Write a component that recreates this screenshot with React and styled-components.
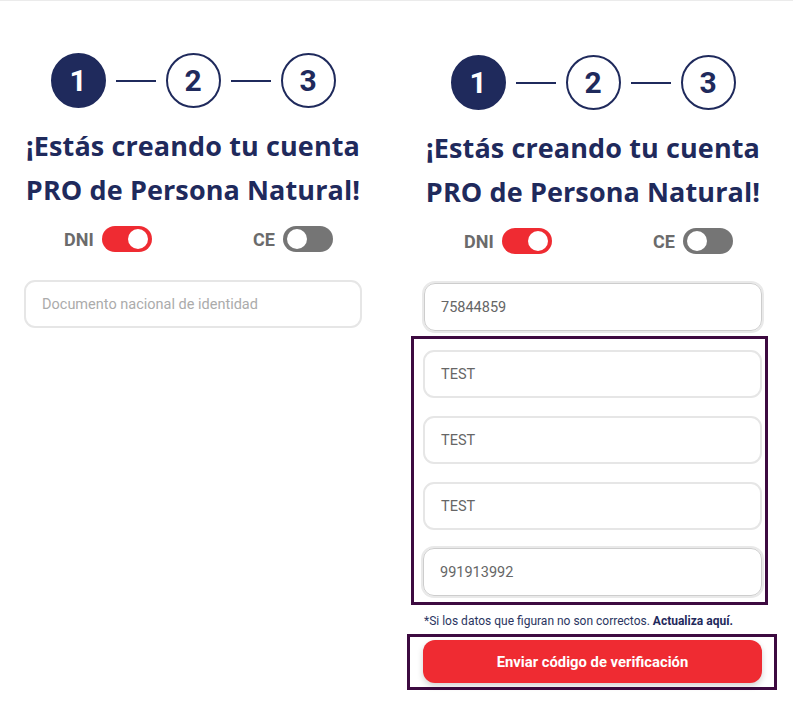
import React from "react";
import styled, { createGlobalStyle, css } from "styled-components";

const Global = createGlobalStyle`
  html, body { margin: 0; padding: 0; background: #fff; }
  body { font-family: Roboto, "Noto Sans", sans-serif; }
  * { box-sizing: border-box; }
`;

const NAVY = "#1f2a5c";

const Page = styled.div`
  border-top: 1px solid #ebebeb;
  display: grid;
  grid-template-columns: 386px 386px;
  column-gap: 14px;
  min-height: 717px;
`;

const Panel = styled.section`
  display: flex;
  flex-direction: column;
  padding: ${(p) => (p.$shift ? 54 : 52)}px 24px 0;
`;

const Stepper = styled.div`
  display: flex;
  align-items: center;
  justify-content: center;
  gap: 10px;
`;

const Circle = styled.div`
  width: 55px;
  height: 55px;
  border-radius: 50%;
  border: 2px solid ${NAVY};
  background: ${(p) => (p.$active ? NAVY : "#fff")};
  color: ${(p) => (p.$active ? "#fff" : NAVY)};
  display: flex;
  align-items: center;
  justify-content: center;
  font-size: 30px;
  font-weight: 700;
`;

const Connector = styled.div`
  width: 40px;
  height: 2px;
  background: ${NAVY};
`;

const Title = styled.h1`
  margin: 16px 0 0;
  text-align: center;
  color: ${NAVY};
  font-family: "Open Sans", Roboto, sans-serif;
  font-size: 27px;
  line-height: 44px;
  font-weight: 700;
  letter-spacing: 0.1px;
  white-space: nowrap;
`;

const ToggleRow = styled.div`
  display: flex;
  justify-content: space-between;
  align-items: center;
  padding: 0 29px 0 40px;
  margin-top: 14px;
`;

const ToggleGroup = styled.label`
  display: flex;
  align-items: center;
  gap: 8px;
  color: #6b6b6b;
  font-size: 18px;
  font-weight: 700;
`;

const Switch = styled.span`
  position: relative;
  width: 50px;
  height: 26px;
  border-radius: 13px;
  background: ${(p) => (p.$on ? "#ef2b32" : "#757575")};
  &::after {
    content: "";
    position: absolute;
    top: 3px;
    ${(p) => (p.$on ? "right: 4px;" : "left: 4px;")}
    width: 20px;
    height: 20px;
    border-radius: 50%;
    background: #fff;
  }
`;

const Field = styled.div`
  height: 48px;
  border-radius: 11px;
  display: flex;
  align-items: center;
  padding: 0 16px;
  font-size: 14.5px;
  ${(p) =>
    p.$filled
      ? css`
          border: 1px solid #cdcdcd;
          box-shadow: 0 0 0 2px #e9e9e9;
          color: #666;
        `
      : css`
          border: 2px solid #e6e6e6;
          color: ${p.$placeholder ? "#ababab" : "#666"};
        `}
`;

const FirstField = styled(Field)`
  margin-top: ${(p) => p.$gap}px;
`;

const Highlight = styled.div`
  border: 3px solid #3d0a40;
  margin: ${(p) => p.$margin};
  padding: ${(p) => p.$padding};
  display: flex;
  flex-direction: column;
  gap: 18px;
`;

const Note = styled.p`
  margin: 9px 0 0;
  font-size: 12px;
  color: #2b3561;
  b { font-weight: 700; color: ${NAVY}; }
`;

const Button = styled.button`
  height: 43px;
  border: none;
  border-radius: 12px;
  background: #ef2b32;
  color: #fff;
  font-family: inherit;
  font-size: 14.8px;
  font-weight: 700;
  box-shadow: 0 3px 6px rgba(0, 0, 0, 0.18);
`;

function Header() {
  return (
    <>
      <Stepper>
        <Circle $active>1</Circle>
        <Connector />
        <Circle>2</Circle>
        <Connector />
        <Circle>3</Circle>
      </Stepper>
      <Title>
        ¡Estás creando tu cuenta
        <br />
        PRO de Persona Natural!
      </Title>
      <ToggleRow>
        <ToggleGroup>
          DNI <Switch $on />
        </ToggleGroup>
        <ToggleGroup>
          CE <Switch />
        </ToggleGroup>
      </ToggleRow>
    </>
  );
}

export default function App() {
  return (
    <>
      <Global />
      <Page>
        <Panel>
          <Header />
          <FirstField $gap={28} $placeholder>
            Documento nacional de identidad
          </FirstField>
        </Panel>
        <Panel $shift>
          <Header />
          <FirstField $gap={29} $filled>
            75844859
          </FirstField>
          <Highlight $margin="5px -6px 0 -13px" $padding="11px 3px 6px 9px">
            <Field>TEST</Field>
            <Field>TEST</Field>
            <Field>TEST</Field>
            <Field $filled>991913992</Field>
          </Highlight>
          <Note>
            *Si los datos que figuran no son correctos. <b>Actualiza aquí.</b>
          </Note>
          <Highlight $margin="6px -15px 0 -17px" $padding="3px 12px 4px 13px">
            <Button>Enviar código de verificación</Button>
          </Highlight>
        </Panel>
      </Page>
    </>
  );
}
